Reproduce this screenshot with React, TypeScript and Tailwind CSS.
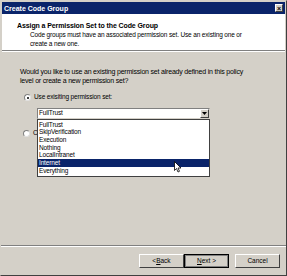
const items = ['FullTrust', 'SkipVerification', 'Execution', 'Nothing', 'LocalIntranet', 'Internet', 'Everything'];

function Radio({ checked }: { checked?: boolean }) {
  return (
    <span className="relative inline-block w-[7px] h-[7px] rounded-full bg-white border border-t-[#808080] border-l-[#808080] border-r-[#e0e0e0] border-b-[#e0e0e0] shrink-0">
      {checked && <span className="absolute left-[1.5px] top-[1.5px] w-[2px] h-[2px] rounded-full bg-black" />}
    </span>
  );
}

function Button({ children, primary }: { children: React.ReactNode; primary?: boolean }) {
  return (
    <div
      className={`w-[45px] h-[14px] shrink-0 flex items-center justify-center text-[6.5px] bg-[#d4d0c8] border ${
        primary ? 'border-black outline outline-1 -outline-offset-2 outline-[#808080]' : 'border-t-white border-l-white border-r-[#404040] border-b-[#404040]'
      }`}
    >
      {children}
    </div>
  );
}

export default function App() {
  return (
    <div
      className="w-[287px] h-[276px] flex flex-col bg-[#d4d0c8] border border-t-[#d4d0c8] border-l-[#d4d0c8] border-r-[#404040] border-b-[#404040] text-black overflow-hidden whitespace-nowrap"
      style={{ fontFamily: '"Liberation Sans", Arial, sans-serif' }}
    >
      <div className="h-[12px] mx-[1px] mt-[1px] bg-[#0a246a] flex items-center justify-between pl-[2px] pr-[2px]">
        <span className="text-white font-bold text-[7px] leading-none">Create Code Group</span>
        <span className="w-[8px] h-[8px] bg-[#d4d0c8] border border-t-white border-l-white border-r-[#404040] border-b-[#404040] flex items-center justify-center text-[7px] font-bold leading-none">×</span>
      </div>

      <div className="h-[37px] bg-white border-b border-[#808080] pl-[15px] pt-[7px] mx-[1px]">
        <div className="font-bold text-[7px] leading-[9px] tracking-[-0.1px]">Assign a Permission Set to the Code Group</div>
        <div className="pl-[13px] text-[6.5px] leading-[9px] tracking-[-0.15px]">
          Code groups must have an associated permission set. Use an existing one or
          <br />
          create a new one.
        </div>
      </div>
      <div className="h-px bg-white mx-[1px]" />

      <div className="flex-1 relative pl-[19px] pt-[16px] text-[6.5px] tracking-[-0.15px]">
        <div className="leading-[8.5px] text-[7px] tracking-[-0.2px]">
          Would you like to use an existing permission set already defined in this policy
          <br />
          level or create a new permission set?
        </div>

        <div className="flex items-center gap-[3px] mt-[9px] pl-[4px] leading-none">
          <Radio checked />
          <span>Use exisiting permission set:</span>
        </div>

        <div className="flex items-center gap-[3px] mt-[29px] pl-[3px] leading-none">
          <Radio />
          <span>Create a new permission set</span>
        </div>

        <div className="absolute left-[36px] top-[56px] w-[173px]">
          <div className="h-[11px] bg-white border border-t-[#808080] border-l-[#808080] border-r-[#d4d0c8] border-b-[#d4d0c8] flex items-center justify-between">
            <span className="pl-[1px] leading-none">FullTrust</span>
            <span className="w-[9px] h-[9px] bg-[#d4d0c8] border border-t-white border-l-white border-r-[#404040] border-b-[#404040] flex items-center justify-center">
              <svg width="5" height="3" viewBox="0 0 5 3">
                <path d="M0 0h5L2.5 3z" fill="#000" />
              </svg>
            </span>
          </div>
          <div className="bg-white border border-[#404040] py-[1px]">
            {items.map((it) => (
              <div
                key={it}
                className={`h-[7.7px] flex items-center pl-[1px] leading-none ${it === 'Internet' ? 'bg-[#0a246a] text-white' : ''}`}
              >
                {it}
              </div>
            ))}
          </div>
          <svg className="absolute left-[137px] top-[53px]" width="8" height="12" viewBox="0 0 8 12">
            <path d="M0.5 0.5v9l2-2 1.5 3.5 1.5-0.7-1.5-3.3h3z" fill="#fff" stroke="#000" strokeWidth="0.8" />
          </svg>
        </div>
      </div>

      <div className="h-px bg-[#808080]" />
      <div className="h-px bg-white" />
      <div className="h-[28px] flex items-center justify-end pr-[6px] pb-[1px]">
        <Button>
          &lt; <u>B</u>ack
        </Button>
        <Button primary>
          <u>N</u>ext &gt;
        </Button>
        <div className="ml-[6px]">
          <Button>Cancel</Button>
        </div>
      </div>
    </div>
  );
}
